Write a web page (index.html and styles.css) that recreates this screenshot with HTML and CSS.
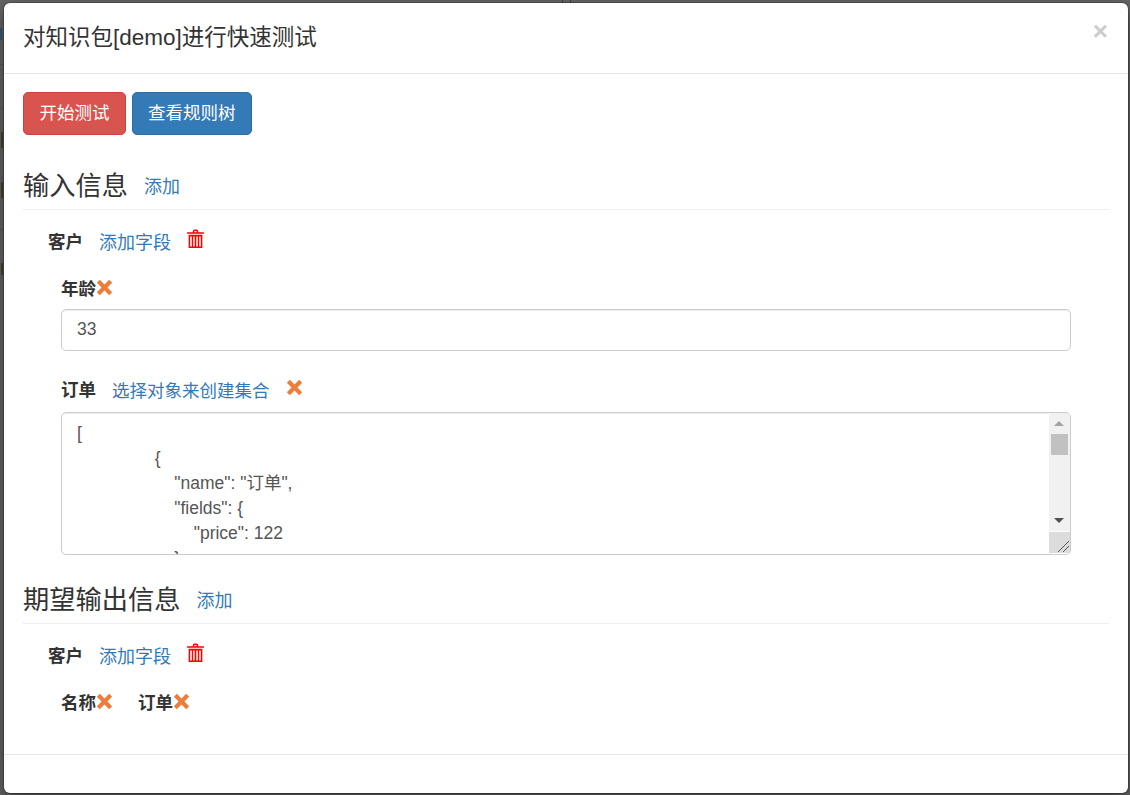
FILE: index.html
```html
<!DOCTYPE html>
<html lang="zh">
<head>
<meta charset="utf-8">
<title>快速测试</title>
<link rel="stylesheet" href="styles.css">
</head>
<body>
<div class="page-behind"></div>
<div class="backdrop">
  <div class="modal">
    <header class="modal-header">
      <h4 class="modal-title">对知识包[demo]进行快速测试</h4>
      <span class="close">×</span>
    </header>
    <div class="modal-body">
      <div class="toolbar">
        <button class="btn btn-danger">开始测试</button>
        <button class="btn btn-primary">查看规则树</button>
      </div>
      <section class="section section-input">
        <div class="section-head"><span class="section-title">输入信息</span><a class="link">添加</a></div>
        <div class="entity">
          <div class="entity-head">
            <b class="label">客户</b><a class="link">添加字段</a>
            <svg class="trash" viewBox="0 0 16 18"><path d="M5.500 3V2a1.500 1.500 0 0 1 1.500-1.500h2A1.500 1.500 0 0 1 10.500 2v1H16v1.500H0V3zM7 3h2V2H7zM1.500 5.500h13V18h-13zM3 7v9.500h1.500V7zm2.800 0v9.500h1.400V7zm3 0v9.500h1.400V7zm2.700 0v9.500H13V7z" fill="#f00" fill-rule="evenodd"/></svg>
          </div>
          <div class="field field-age">
            <div class="field-label"><b class="label label-low">年龄</b><svg class="x" viewBox="0 0 16 16"><path d="M3.600 0.800 8 5.200l4.400-4.400 2.800 2.800L10.800 8l4.400 4.400-2.800 2.800L8 10.800l-4.400 4.400-2.800-2.800L5.200 8 0.800 3.600z"/></svg></div>
            <input class="control" type="text" value="33">
          </div>
          <div class="field field-order">
            <div class="field-label"><b class="label">订单</b><a class="link link-order">选择对象来创建集合</a><svg class="x x-gap" viewBox="0 0 16 16"><path d="M3.600 0.800 8 5.200l4.400-4.400 2.800 2.800L10.800 8l4.400 4.400-2.800 2.800L8 10.800l-4.400 4.400-2.800-2.800L5.200 8 0.800 3.600z"/></svg></div>
            <div class="area-wrap">
              <textarea class="control area">[
                {
                    "name": "订单",
                    "fields": {
                        "price": 122
                    }
                }
]</textarea>
              <div class="scrollbar">
                <span class="arrow arrow-up"></span>
                <span class="thumb"></span>
                <span class="arrow arrow-down"></span>
              </div>
              <div class="corner">
                <svg class="grip" viewBox="0 0 12 12"><path d="M1 12 12 1M6 12l6-6" stroke="#555" stroke-width="1" fill="none"/></svg>
              </div>
            </div>
          </div>
        </div>
      </section>
      <section class="section section-output">
        <div class="section-head"><span class="section-title">期望输出信息</span><a class="link">添加</a></div>
        <div class="entity">
          <div class="entity-head">
            <b class="label">客户</b><a class="link">添加字段</a>
            <svg class="trash" viewBox="0 0 16 18"><path d="M5.500 3V2a1.500 1.500 0 0 1 1.500-1.500h2A1.500 1.500 0 0 1 10.500 2v1H16v1.500H0V3zM7 3h2V2H7zM1.500 5.500h13V18h-13zM3 7v9.500h1.500V7zm2.800 0v9.500h1.400V7zm3 0v9.500h1.400V7zm2.700 0v9.500H13V7z" fill="#f00" fill-rule="evenodd"/></svg>
          </div>
          <div class="out-fields">
            <span class="out-field"><b class="label label-low">名称</b><svg class="x" viewBox="0 0 16 16"><path d="M3.600 0.800 8 5.200l4.400-4.400 2.800 2.800L10.800 8l4.400 4.400-2.800 2.800L8 10.800l-4.400 4.400-2.800-2.800L5.200 8 0.800 3.600z"/></svg></span>
            <span class="out-field"><b class="label label-low">订单</b><svg class="x" viewBox="0 0 16 16"><path d="M3.600 0.800 8 5.200l4.400-4.400 2.800 2.800L10.800 8l4.400 4.400-2.800 2.800L8 10.800l-4.400 4.400-2.800-2.800L5.200 8 0.800 3.600z"/></svg></span>
          </div>
        </div>
      </section>
    </div>
    <footer class="modal-footer"></footer>
  </div>
</div>
</body>
</html>
```
FILE: styles.css
```css
* { box-sizing: border-box; }
html, body { margin: 0; height: 100%; }
body {
  background: #666;
  font-family: "Liberation Sans", "Noto Sans CJK SC", sans-serif;
  font-size: 17.5px;
  line-height: 25px;
  color: #333;
  overflow: hidden;
  position: relative;
}
.page-behind {
  position: absolute;
  inset: 0;
  background:
    linear-gradient(#3c5a76, #3c5a76) 0 28px / 2px 12px no-repeat,
    linear-gradient(#4a4030, #4a4030) 1px 132px / 2px 16px no-repeat,
    linear-gradient(#4a4030, #4a4030) 1px 182px / 2px 16px no-repeat,
    linear-gradient(#4a4030, #4a4030) 1px 263px / 2px 12px no-repeat,
    linear-gradient(#5a5a5a, #5a5a5a) 0 64px / 4px 1px no-repeat,
    linear-gradient(#5a5a5a, #5a5a5a) 0 108px / 4px 1px no-repeat,
    linear-gradient(#5a5a5a, #5a5a5a) 0 178px / 4px 1px no-repeat,
    linear-gradient(#5a5a5a, #5a5a5a) 0 229px / 4px 1px no-repeat,
    linear-gradient(#444, #444) 562px 0 / 1px 3px no-repeat,
    linear-gradient(#444, #444) 570px 0 / 1px 3px no-repeat;
}
.backdrop { position: relative; height: 795px; padding: 3px 2px 2px 4px; }
.modal {
  height: 790px;
  background: #fff;
  border-radius: 6px;
  display: flex;
  flex-direction: column;
  position: relative;
  box-shadow: 0 0 0 1px rgba(0,0,0,.2), 0 6px 18px rgba(0,0,0,.5);
}
.modal-header {
  height: 71px;
  flex: none;
  border-bottom: 1px solid #e5e5e5;
  padding: 19px 19px 0;
}
.modal-title { margin: 0; font-size: 22.5px; font-weight: 400; line-height: 31px; }
.close {
  position: absolute;
  top: 15px;
  right: 20px;
  font-size: 26px;
  line-height: 27px;
  font-weight: 700;
  color: #ccc;
}
.modal-body { flex: 1; padding: 18px 19px 0; }
.toolbar { display: flex; gap: 6px; height: 43px; }
.btn {
  font: inherit;
  color: #fff;
  border: 1px solid;
  border-radius: 5px;
  height: 43px;
  padding: 0 15px;
}
.btn-danger { background: #d9534f; border-color: #d43f3a; min-width: 103px; }
.btn-primary { background: #337ab7; border-color: #2e6da4; }
.section-head {
  display: flex;
  align-items: flex-start;
  gap: 16px;
  border-bottom: 1px solid #eee;
  height: 44px;
}
.section-input { margin-top: 31px; }
.section-output { margin-top: 25px; }
.section-title { font-size: 26.25px; line-height: 36px; margin-top: 2px; }
.section-head .link { margin-top: 9px; }
.link { color: #337ab7; font-size: 18px; }
.entity { padding-left: 25px; width: 1048px; }
.label { font-weight: 700; font-size: 17.5px; }
.label-low { padding-top: 2px; }
.entity-head {
  display: flex;
  align-items: flex-start;
  height: 50px;
  padding-top: 20px;
  line-height: 25px;
}
.entity-head .link { margin: 1px 0 0 16px; }
.trash { width: 17px; height: 19px; margin: -1px 0 0 16px; }
.field { padding-left: 13px; }
.field-age { margin-top: 16px; }
.field-label { display: flex; align-items: center; height: 25px; }
.x { width: 17px; height: 17px; fill: #ed7d3a; flex: none; margin-top: -3px; }
.x-gap { margin: -7px 0 0 16px; }
.link-order { margin-left: 16px; font-size: 17.5px; padding-top: 2px; }
.control {
  display: block;
  width: 100%;
  font: inherit;
  color: #555;
  border: 1px solid #ccc;
  border-radius: 5px;
  padding: 0 15px;
  background: #fff;
  box-shadow: inset 0 1px 1px rgba(0,0,0,.075);
}
input.control { height: 42px; margin-top: 8px; padding-bottom: 2px; }
.field-order { margin-top: 27px; }
.area-wrap { position: relative; margin-top: 9px; height: 143px; }
.area {
  height: 143px;
  padding-top: 8px;
  line-height: 25px;
  resize: none;
  overflow: hidden;
  white-space: pre;
}
.scrollbar {
  position: absolute;
  top: 1px;
  right: 1px;
  width: 21px;
  height: 118px;
  background: #f1f1f1;
  border-top-right-radius: 4px;
}
.thumb {
  position: absolute;
  top: 21px;
  left: 2px;
  width: 17px;
  height: 21px;
  background: #c1c1c1;
}
.arrow {
  position: absolute;
  left: 5px;
  width: 0;
  height: 0;
  border-left: 5px solid transparent;
  border-right: 5px solid transparent;
}
.arrow-up { top: 8px; border-bottom: 5px solid #a3a3a3; }
.arrow-down { top: 105px; border-top: 5px solid #505050; }
.corner {
  position: absolute;
  right: 1px;
  bottom: 2px;
  width: 21px;
  height: 21px;
  background: #dcdcdc;
}
.grip { position: absolute; right: 1px; bottom: 1px; width: 12px; height: 12px; display: block; }
.out-fields { display: flex; gap: 25px; padding-left: 13px; margin-top: 16px; height: 25px; }
.out-field { display: inline-flex; align-items: center; }
.modal-footer { height: 39px; flex: none; border-top: 1px solid #e5e5e5; }
```
